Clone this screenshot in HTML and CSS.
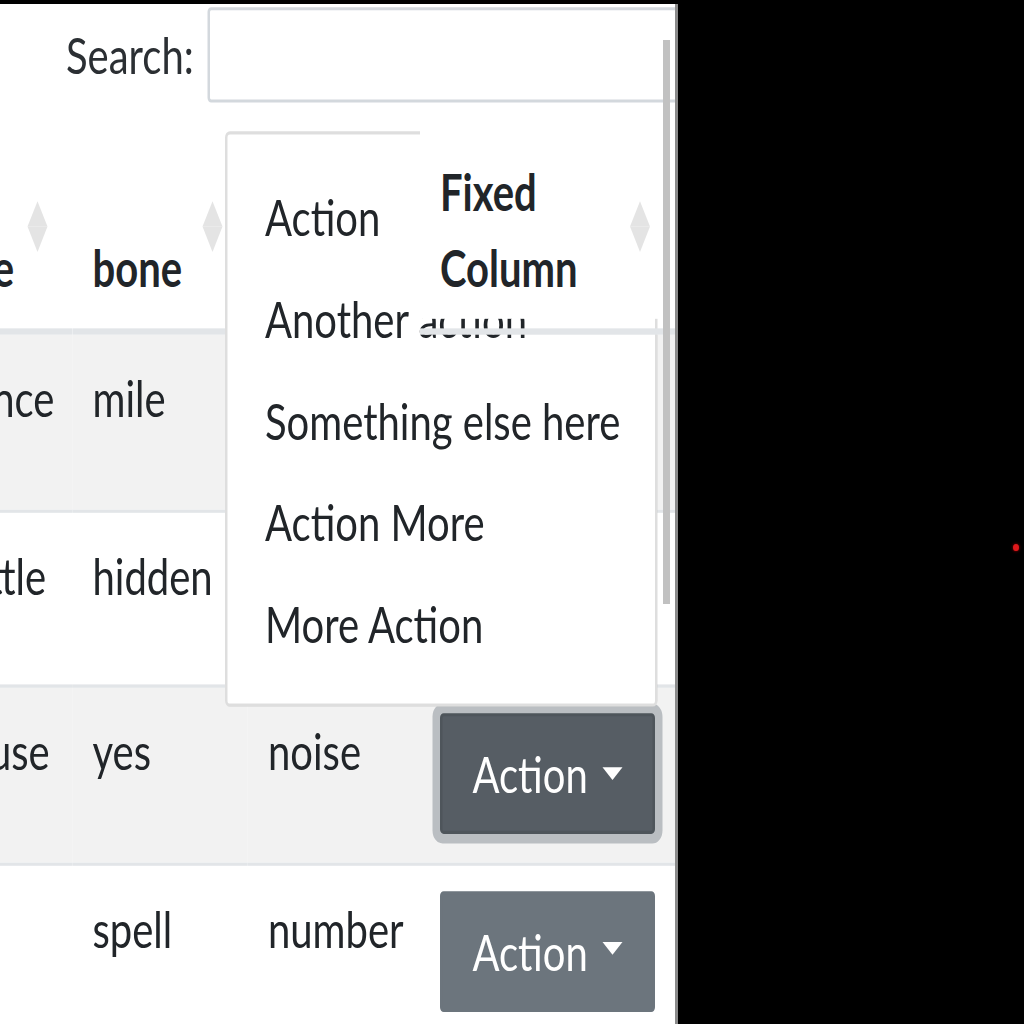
FILE: index.html
```
<!DOCTYPE html>
<html lang="en">
<head>
<meta charset="utf-8">
<title>Fixed column table</title>
<link rel="stylesheet" href="styles.css">
</head>
<body>
<div class="viewport">
  <div class="stage">
    <div class="filter">
      <label class="filter-label" for="q">Search:</label>
      <input class="search" id="q" type="search">
    </div>
    <div class="table-wrap">
      <table class="grid">
        <colgroup>
          <col class="c1"><col class="c2"><col class="c3"><col class="c4">
        </colgroup>
        <thead>
          <tr>
            <th class="sorting">line</th>
            <th class="sorting">bone</th>
            <th class="sorting">sound</th>
            <th class="sorting fixed">Fixed Column</th>
          </tr>
        </thead>
        <tbody>
          <tr>
            <td>dance</td><td>mile</td><td>paper</td>
            <td><button class="btn">Action</button></td>
          </tr>
          <tr>
            <td>settle</td><td>hidden</td><td>train</td>
            <td><button class="btn">Action</button></td>
          </tr>
          <tr>
            <td>cause</td><td>yes</td><td>noise</td>
            <td><button class="btn active">Action</button></td>
          </tr>
          <tr>
            <td>to</td><td>spell</td><td>number</td>
            <td><button class="btn">Action</button></td>
          </tr>
        </tbody>
      </table>
      <div class="menu">
        <a class="item">Action</a>
        <a class="item">Another action</a>
        <a class="item">Something else here</a>
        <a class="item">Action More</a>
        <a class="item">More Action</a>
      </div>
    </div>
  </div>
  <div class="thumb"></div>
</div>
<div class="dot"></div>
</body>
</html>
```
FILE: styles.css
```
html, body {
  margin: 0;
  padding: 0;
  background: #000;
}

.viewport {
  position: relative;
  width: 675px;
  height: 1020px;
  margin-top: 4px;
  overflow: hidden;
  background: #fff;
  border-right: 3px solid #8a8a8a;
}

.stage {
  width: 270px;
  padding-top: 1px;
  transform: scale(2.5, 3.18);
  transform-origin: 0 0;
  font-family: Lato, "Open Sans", sans-serif;
  font-size: 16px;
  line-height: 24px;
  color: #212529;
}

.filter {
  display: flex;
  align-items: center;
  height: 30px;
  padding-left: 26.4px;
}

.filter-label {
  white-space: nowrap;
  color: #2b2f33;
}

.search {
  -webkit-appearance: none;
  appearance: none;
  box-sizing: border-box;
  flex: none;
  width: 190px;
  height: 30px;
  margin: 0 0 0 5.4px;
  padding: 0 8px;
  border: 1px solid #d3d8dd;
  border-radius: 1.5px;
  background: #fff;
  font: inherit;
  outline: none;
}

.table-wrap {
  position: relative;
  margin-top: 6px;
  margin-left: -28px;
  width: 298px;
}

.grid {
  border-collapse: separate;
  border-spacing: 0;
  table-layout: fixed;
  width: 298px;
}

.c1 { width: 57px; }
.c2 { width: 70.2px; }
.c3 { width: 68.8px; }
.c4 { width: 102px; }

.grid th {
  position: relative;
  text-align: left;
  vertical-align: bottom;
  font-weight: 700;
  padding: 10px 30px 7px 8px;
  border-bottom: 2px solid #e2e5e8;
  background: #fff;
  white-space: normal;
}

.grid th.fixed {
  z-index: 3;
  background: linear-gradient(#fff, #fff) top left / 100% calc(100% - 3px) no-repeat;
}

.sorting::before,
.sorting::after {
  content: "";
  position: absolute;
  right: 10px;
  width: 0;
  height: 0;
  border-left: 4.4px solid transparent;
  border-right: 4.4px solid transparent;
}

.sorting::before {
  bottom: 50%;
  border-bottom: 8px solid #e4e4e4;
}

.sorting::after {
  top: 50%;
  border-top: 8px solid #e4e4e4;
}

.grid td {
  padding: 8px 8px 8.5px;
  vertical-align: top;
  border-top: 1px solid #e2e5e8;
  white-space: nowrap;
}

.grid tbody tr:first-child td {
  border-top: 0;
}

.grid tbody tr:nth-child(odd) td {
  background: rgba(0, 0, 0, 0.05);
}

.btn {
  display: inline-block;
  vertical-align: top;
  box-sizing: border-box;
  height: 38px;
  margin: 0;
  padding: 6px 12px;
  border: 1px solid #6c757d;
  border-radius: 1.5px;
  background: #6c757d;
  color: #fff;
  font: inherit;
  white-space: nowrap;
}

.btn::after {
  content: "";
  display: inline-block;
  margin-left: 6px;
  vertical-align: 0.255em;
  border-top: 0.3em solid #fff;
  border-left: 0.3em solid transparent;
  border-right: 0.3em solid transparent;
}

.btn.active {
  background: #565d64;
  border-color: #4e555b;
  box-shadow: 0 0 0 3px rgba(130, 138, 145, 0.5);
}

.menu {
  position: absolute;
  z-index: 2;
  top: 3px;
  left: 118px;
  box-sizing: border-box;
  width: 173px;
  padding: 9.5px 0;
  background: #fff;
  border: 1px solid rgba(0, 0, 0, 0.13);
  border-radius: 2px;
}

.item {
  display: block;
  padding: 4px 15px;
  color: #212529;
  white-space: nowrap;
}

.thumb {
  position: absolute;
  z-index: 5;
  left: 663px;
  top: 36px;
  width: 7px;
  height: 564px;
  background: #c1c1c1;
}

.dot {
  position: absolute;
  left: 1013px;
  top: 544px;
  width: 6px;
  height: 7px;
  border-radius: 50%;
  background: #e0191c;
  box-shadow: 0 0 3px #a30000;
}
```
